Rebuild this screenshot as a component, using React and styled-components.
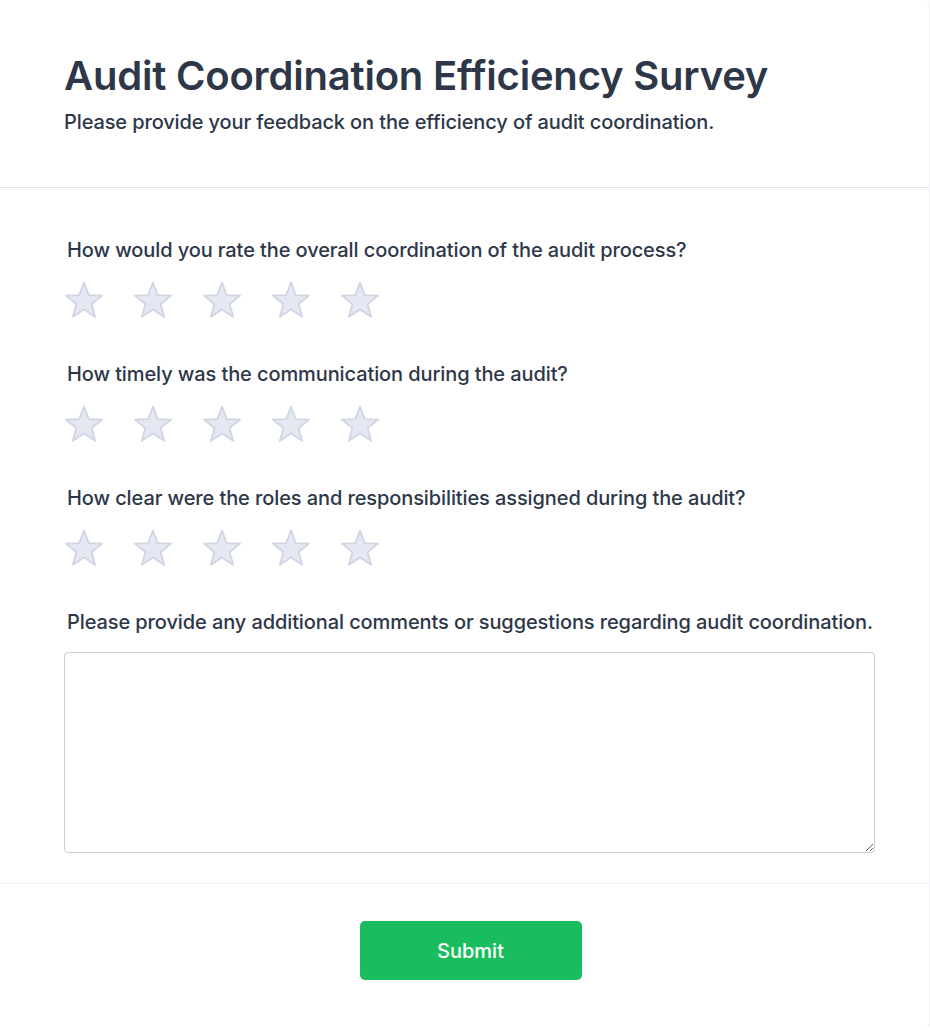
import React from 'react'
import styled, { createGlobalStyle } from 'styled-components'

const GlobalStyle = createGlobalStyle`
  html, body {
    margin: 0;
    padding: 0;
    background: #ffffff;
  }
  body {
    font-family: Inter, "Noto Sans", sans-serif;
    color: #2d3748;
  }
  * { box-sizing: border-box; }
`

const questions = [
  'How would you rate the overall coordination of the audit process?',
  'How timely was the communication during the audit?',
  'How clear were the roles and responsibilities assigned during the audit?',
]

export default function App() {
  return (
    <>
      <GlobalStyle />
      <Card>
        <Header>
          <Title>Audit Coordination Efficiency Survey</Title>
          <Subtitle>Please provide your feedback on the efficiency of audit coordination.</Subtitle>
        </Header>
        <Body>
          {questions.map((q) => (
            <Question key={q}>
              <Label>{q}</Label>
              <Stars>
                {[1, 2, 3, 4, 5].map((n) => (
                  <StarButton key={n} type="button" aria-label={`${n} star`}>
                    <Star />
                  </StarButton>
                ))}
              </Stars>
            </Question>
          ))}
          <Question $last>
            <Label>Please provide any additional comments or suggestions regarding audit coordination.</Label>
            <Comments />
          </Question>
        </Body>
        <Footer>
          <SubmitButton type="button">Submit</SubmitButton>
        </Footer>
      </Card>
    </>
  )
}

function Star() {
  return (
    <svg width="40" height="40" viewBox="0 0 40 40">
      <path
        d="M20 2.5L24.7 15.03L38.07 15.63L27.61 23.97L31.17 36.87L20 29.5L8.83 36.87L12.39 23.97L1.93 15.63L15.3 15.03Z"
        fill="#e5e8f2"
        stroke="#d0d5e3"
        strokeWidth="1.8"
        strokeLinejoin="round"
      />
    </svg>
  )
}

const Card = styled.div`
  width: 930px;
  min-height: 1030px;
  background: #fff;
  border-right: 1px solid #eef0f5;
  border-radius: 0 6px 6px 0;
`

const Header = styled.header`
  padding: 52px 54px 50px 64px;
  border-bottom: 1px solid #dfe2ec;
`

const Title = styled.h1`
  margin: 0;
  font-size: 40px;
  line-height: 48px;
  font-weight: 600;
  letter-spacing: -0.2px;
  color: #2d3748;
`

const Subtitle = styled.p`
  margin: 7px 0 0;
  font-size: 20px;
  line-height: 30px;
  font-weight: 500;
  letter-spacing: -0.12px;
  color: #2d3748;
`

const Body = styled.main`
  padding: 47px 54px 30px 64px;
  border-bottom: 1px solid #eceef4;
`

const Question = styled.section`
  display: flex;
  flex-direction: column;
  gap: 15px;
  margin-bottom: ${({ $last }) => ($last ? '0' : '39px')};
`

const Label = styled.label`
  display: block;
  padding-left: 3px;
  font-size: 20px;
  line-height: 30px;
  font-weight: 500;
  letter-spacing: -0.1px;
  white-space: nowrap;
  color: #2d3748;
`

const Stars = styled.div`
  display: flex;
  gap: 29px;
  height: 40px;
`

const StarButton = styled.button`
  width: 40px;
  height: 40px;
  padding: 0;
  border: 0;
  background: none;
  cursor: pointer;
  display: flex;
  align-items: center;
  justify-content: center;
`

const Comments = styled.textarea`
  display: block;
  width: 100%;
  height: 201px;
  padding: 10px 12px;
  border: 1px solid #c8ccda;
  border-radius: 4px;
  font-family: inherit;
  font-size: 16px;
  color: #2d3748;
  resize: vertical;
  outline: none;
`

const Footer = styled.footer`
  display: flex;
  justify-content: center;
  padding: 37px 54px 50px 66px;
`

const SubmitButton = styled.button`
  width: 222px;
  height: 59px;
  border: 0;
  border-radius: 5px;
  background: #1abd5d;
  color: #fff;
  font-family: Inter, "Noto Sans", sans-serif;
  font-size: 20px;
  font-weight: 500;
  cursor: pointer;
`
